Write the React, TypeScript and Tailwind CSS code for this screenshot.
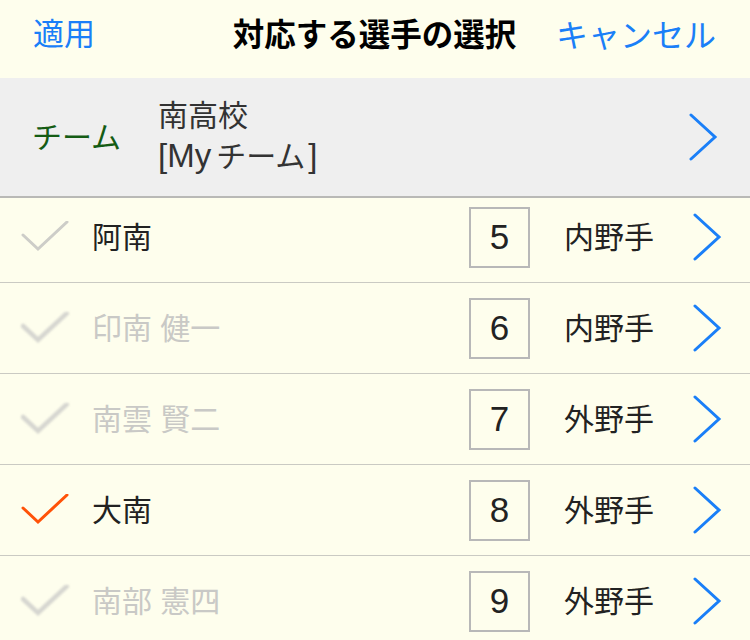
import React from "react";

interface Player {
  name: string;
  number: number;
  position: string;
  state: "off" | "dim" | "on";
}

const players: Player[] = [
  { name: "阿南", number: 5, position: "内野手", state: "off" },
  { name: "印南 健一", number: 6, position: "内野手", state: "dim" },
  { name: "南雲 賢二", number: 7, position: "外野手", state: "dim" },
  { name: "大南", number: 8, position: "外野手", state: "on" },
  { name: "南部 憲四", number: 9, position: "外野手", state: "dim" },
];

function Chevron() {
  return (
    <svg width="30" height="48" viewBox="0 0 30 48" className="shrink-0">
      <polyline points="3,2 27,24 3,46" fill="none" stroke="#1a7ff8" strokeWidth="3" strokeLinecap="round" strokeLinejoin="miter" />
    </svg>
  );
}

function Check({ state }: { state: Player["state"] }) {
  const color = state === "on" ? "#ff5208" : state === "off" ? "#cdcdc8" : "#d6d6d0";
  return (
    <svg
      width="48"
      height="32"
      viewBox="0 0 48 32"
      className={`shrink-0 ${state === "dim" ? "blur-[0.8px]" : ""}`}
    >
      <polyline
        points="2,14 17,28 46,1"
        fill="none"
        stroke={color}
        strokeWidth={state === "dim" ? 4.5 : 3}
        strokeLinecap="round"
      />
    </svg>
  );
}

export default function App() {
  return (
    <div
      className="w-[750px] h-[640px] overflow-hidden bg-[#fefeed] text-[30px] text-[#222]"
      style={{ fontFamily: '"Liberation Sans", "Noto Sans CJK JP", sans-serif' }}
    >
      {/* header */}
      <div className="h-[78px] flex items-center pl-[33px] pr-[34px] pb-[7px]">
        <div className="flex-1 text-[31px] text-[#1a7ff8]">適用</div>
        <div className="font-bold text-[31.5px] text-black">対応する選手の選択</div>
        <div className="flex-1 text-right text-[32px] text-[#1a7ff8]">キャンセル</div>
      </div>

      {/* team */}
      <div className="h-[120px] bg-[#efefef] border-b-2 border-[#b9b9b6] flex items-center pl-[32px] pr-[32px]">
        <div className="w-[126px] text-[#145c14]">チーム</div>
        <div className="flex-1 leading-[40px] text-[#333] -mt-[2px]">
          <div>南高校</div>
          <div>
            <span className="text-[33px]">[My</span>
            <span className="ml-[5px]">チーム</span>
            <span className="text-[33px] ml-[3px]">]</span>
          </div>
        </div>
        <Chevron />
      </div>

      {/* players */}
      <div>
        {players.map((p, i) => (
          <div
            key={p.number}
            className={`flex items-center pl-[21px] pr-[28px] border-b border-[#cacac3] ${
              i === 0 ? "h-[85px] pb-[6px]" : "h-[91px]"
            }`}
          >
            <Check state={p.state} />
            <div className={`flex-1 ml-[23px] ${p.state === "dim" ? "text-[#c9c9c6]" : "text-[#222]"}`}>
              {p.name}
            </div>
            <div className="w-[61px] h-[61px] border-2 border-[#b8b8b8] flex items-center justify-center text-[35px]">
              {p.number}
            </div>
            <div className="w-[98px] ml-[34px]">{p.position}</div>
            <div className="ml-[30px]">
              <Chevron />
            </div>
          </div>
        ))}
      </div>
    </div>
  );
}
